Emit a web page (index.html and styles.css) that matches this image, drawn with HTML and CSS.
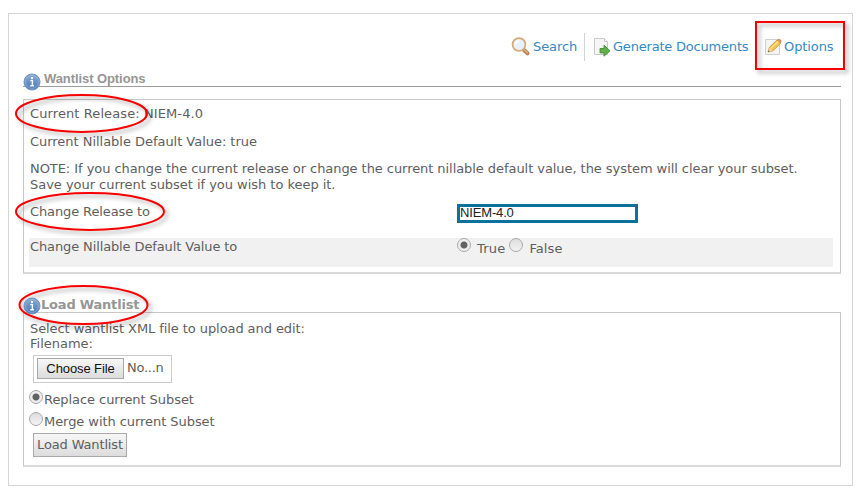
FILE: index.html
```html
<!DOCTYPE html>
<html lang="en">
<head>
<meta charset="utf-8">
<title>Wantlist Options</title>
<link rel="stylesheet" href="styles.css">
</head>
<body>
<svg class="defs" width="0" height="0" aria-hidden="true">
  <defs>
    <linearGradient id="blue" x1="0" y1="0" x2="0" y2="1"><stop offset="0" stop-color="#87aad7"/><stop offset="1" stop-color="#4678b4"/></linearGradient>
    <symbol id="info" viewBox="0 0 18 18">
      <circle cx="9" cy="9" r="8" fill="url(#blue)" stroke="#7595bd"/>
      <circle cx="9" cy="9" r="6.4" fill="none" stroke="#a1bde0" stroke-width=".6"/>
      <path d="M7.3 7.6h2.1v4.8M7.2 12.7h3.8" fill="none" stroke="#fff" stroke-width="1.4"/>
      <circle cx="9" cy="5" r="1.2" fill="#fff"/>
    </symbol>
  </defs>
</svg>
<main class="page">
  <nav class="toolbar">
    <a class="tool search">
      <svg width="20" height="20" viewBox="0 0 20 20"><path d="M12.5 12.5l4 3.8" stroke="#b98252" stroke-width="4" stroke-linecap="round"/><path d="M12.8 12.2l4 3.8" stroke="#e2b481" stroke-width="1.5"/><circle cx="8" cy="7.500" r="6.4" fill="#e9f2fc" stroke="#d5aa79" stroke-width="1.8"/><path d="M4.5 7.5a3.500 3.500 0 0 1 3.500-3.500" fill="none" stroke="#fff" stroke-width="1.5"/></svg>
      <span>Search</span>
    </a>
    <a class="tool generate">
      <svg width="18" height="20" viewBox="0 0 18 20"><path d="M1.500 1.500h10l3 3v13h-13z" fill="#f6f6f6" stroke="#c9c9c9"/><path d="M11.500 1.500v3h3" fill="#fff" stroke="#c9c9c9"/><path d="M7 11.500h4V8.200l6 5.600-6 5.400v-3.300H7z" fill="#62ae4b" stroke="#3f8e35" stroke-width=".9"/></svg>
      <span>Generate Documents</span>
    </a>
    <a class="tool options">
      <svg width="19" height="20" viewBox="0 0 19 20"><path d="M1.500 2.500h14v15h-14z" fill="#f4f4f4" stroke="#cfcfcf"/><path d="M4 15l1.300-4.600L13 3l3.500 3.500-7.700 7.400z" fill="#f5c750" stroke="#c98f2e" stroke-width=".8"/><path d="M6.800 11.400l7.800-7.300" stroke="#ffe999" stroke-width="1.300"/><path d="M13 3l1.200-1.100q1.100-.7 2.400.6t.8 2.500L16.500 6.500z" fill="#d9935b"/><path d="M4 15l1.300-4.600 3.500 3.500z" fill="#ecd2a7"/><path d="M4 15l.5-1.800 1.300 1.300z" fill="#555"/></svg>
      <span>Options</span>
    </a>
  </nav>

  <header class="heading first"><svg class="info" width="18" height="18"><use href="#info"/></svg><h2><span>Wantlist Options</span></h2></header>
  <section class="panel settings">
    <p class="release">Current Release: NIEM-4.0</p>
    <p class="nillable">Current Nillable Default Value: true</p>
    <p class="note"><span class="warning">NOTE: If you change the current release or change the current nillable default value, the system will clear your subset.</span><br><span class="save">Save your current subset if you wish to keep it.</span></p>
    <div class="row change"><span class="label">Change Release to</span><div class="field">NIEM-4.0</div></div>
    <div class="row band"><span class="label">Change Nillable Default Value to</span><i class="radio on"></i><span class="true">True</span><i class="radio"></i><span class="false">False</span></div>
  </section>

  <header class="heading second"><svg class="info" width="18" height="18"><use href="#info"/></svg><h2><span>Load Wantlist</span></h2></header>
  <section class="panel upload">
    <p class="select">Select wantlist XML file to upload and edit:</p>
    <p class="filename">Filename:</p>
    <div class="file"><button class="choose">Choose File</button><span>No...n</span></div>
    <label class="choice replace"><i class="radio on"></i><span>Replace current Subset</span></label>
    <label class="choice"><i class="radio"></i><span>Merge with current Subset</span></label>
    <button class="load">Load Wantlist</button>
  </section>
</main>
<svg class="marks" width="862" height="500" viewBox="0 0 862 500">
  <g class="ink">
    <rect x="756" y="22" width="88" height="47"/>
    <ellipse cx="81.500" cy="113.500" rx="65.500" ry="18.500"/>
    <ellipse cx="90" cy="211.500" rx="74" ry="18.500"/>
    <ellipse cx="83.500" cy="305" rx="64" ry="19"/>
  </g>
</svg>
</body>
</html>
```
FILE: styles.css
```css
* { box-sizing: border-box; }
body { margin: 0; width: 862px; height: 500px; overflow: hidden; background: #fff; color: #5e5e5e; font: 13px/16px "DejaVu Sans", Verdana, sans-serif; }
.defs { position: absolute; }
.page { width: 845px; height: 473px; margin: 13px 0 0 8px; border: 1px solid #d5d5d5; padding: 0 11px 0 14px; white-space: nowrap; }
p, h2 { margin: 0; }
svg { flex: none; }
.toolbar { height: 59px; padding-top: 19px; display: flex; margin-left: 488px; }
.tool { display: flex; height: 28px; color: #338bc5; align-items: center; }
.tool span { line-height: 28px; }
.search { width: 74px; border-right: 1px solid #d3d3d3; }
.search span { margin-left: 2px; letter-spacing: -.08px; }
.generate { width: 179px; padding-left: 8px; letter-spacing: -.2px; }
.generate span { margin-left: 2px; }
.options span { margin-left: 1px; letter-spacing: -.1px; }
.heading { display: flex; position: relative; width: 818px; color: #969696; }
.heading h2 { flex: 1; font-size: 13px; line-height: 16px; font-weight: bold; }
.heading .info { position: relative; z-index: 1; }
.first { height: 26px; }
.first .info { margin-right: -18px; }
.first h2 { height: 14px; border-bottom: 1px solid #9b9b9b; padding-left: 21px; font: bold 13px/12px "Liberation Sans", Arial, sans-serif; letter-spacing: -.08px; }
.panel { width: 818px; border: 1px solid #c8c8c8; border-bottom: 2px solid #dadada; padding-left: 6px; }
.settings { height: 175px; padding-top: 6px; }
.release { height: 28px; letter-spacing: .1px; }
.nillable { height: 27px; letter-spacing: -.03px; }
.note { height: 32px; }
.warning { letter-spacing: -.06px; }
.save { letter-spacing: -.03px; }
.row { display: flex; width: 804px; margin-left: -1px; padding-left: 1px; }
.label { width: 427px; letter-spacing: -.12px; }
.change { margin-top: 11px; height: 34px; }
.field { width: 181px; height: 19px; border: 3px solid #0d719b; background: #fff; color: #222; font: 13px/12px "Liberation Sans", Arial, sans-serif; letter-spacing: -.15px; }
.band { height: 29px; background: #f1f1f1; line-height: 17px; }
.radio { display: block; flex: none; width: 14px; height: 14px; border: 1px solid #aaa; border-radius: 50%; background: linear-gradient(#ddd, #f3f3f3); }
.radio.on { background: radial-gradient(circle, #626262 0 3px, #eee 4px); }
.true { margin: 2px 4px 0 6px; letter-spacing: .2px; }
.false { margin: 2px 0 0 6px; letter-spacing: .1px; }
.second { height: 15px; margin-top: 23px; }
.second h2 { line-height: 15px; letter-spacing: -.2px; }
.upload { height: 155px; padding-top: 8px; }
.select { height: 15px; letter-spacing: -.08px; }
.filename { height: 19px; }
.file { display: flex; margin-left: 3px; width: 139px; height: 28px; border: 1px solid #ccc; padding: 2px 3px; line-height: 20px; letter-spacing: -.25px; }
.file span { margin-left: 3px; }
button { border: 1px solid #a8a8a8; padding: 0; background: linear-gradient(#f7f7f7, #dcdcdc); white-space: nowrap; }
.choose { width: 87px; height: 21px; color: #111; font: 13px/17px "Liberation Sans", Arial, sans-serif; letter-spacing: -.1px; }
.choice { display: flex; height: 22px; padding-top: 7px; margin-left: -1px; letter-spacing: -.06px; }
.choice span { margin: 2px 0 0 1px; }
.load { display: block; width: 94px; height: 24px; margin: 6px 0 0 3px; color: #5e5e5e; font: 13px/20px "DejaVu Sans", Verdana, sans-serif; letter-spacing: -.15px; }
.marks { position: absolute; left: 0; top: 0; pointer-events: none; }
.ink { fill: none; stroke: #f80000; stroke-width: 2; filter: drop-shadow(3px 3px 2px #0005); }
```
